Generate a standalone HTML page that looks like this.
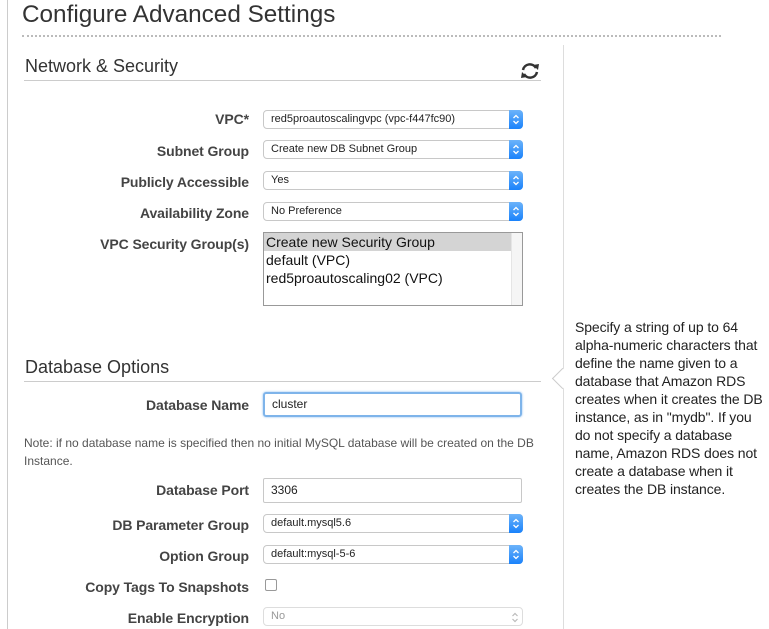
<!DOCTYPE html>
<html><head><style>
body{margin:0;width:769px;height:629px;background:#fff;font-family:"Liberation Sans",Arial,sans-serif;position:relative;overflow:hidden;color:#333}
.a{position:absolute}
.lbl{position:absolute;right:520px;font-weight:bold;font-size:14px;color:#444;white-space:nowrap;letter-spacing:-0.1px}
.sel{position:absolute;left:263px;width:258px;height:17px;border:1px solid #c8c8c8;border-radius:4px;background:#fff;font-size:11px;line-height:17px;color:#222;box-sizing:content-box}
.sel span{padding-left:7px}
.sel i{position:absolute;right:-1px;top:-1px;width:14px;height:19px;background:linear-gradient(#6cb3fa,#1a82fb);border-radius:0 4px 4px 0}
.sel svg{position:absolute;left:3px;top:4px}
.inp{position:absolute;left:263px;width:259px;border:1px solid #c8c8c8;border-radius:2px;font-size:12px;color:#222;padding-left:7px;box-sizing:border-box}
h2{position:absolute;margin:0;font-weight:normal;font-size:18px;color:#333}
.hr{position:absolute;height:1px;background:#ccc}
</style></head><body>
<div class="a" style="left:7px;top:0;width:1px;height:629px;background:#ccc"></div>
<div class="a" style="left:22px;top:1px;font-size:24.3px;color:#333">Configure Advanced Settings</div>
<div class="a" style="left:22px;top:35px;width:699px;border-top:2px dotted #bbb"></div>
<div class="a" style="left:563px;top:45px;width:1px;height:584px;background:#ddd"></div>
<h2 style="left:25px;top:56px">Network &amp; Security</h2>
<div class="hr" style="left:24px;top:80px;width:517px"></div>
<svg class="a" style="left:520px;top:62px" width="20" height="18" viewBox="0 0 20 18"><path d="M3 8 A7 7 0 0 1 16 6" fill="none" stroke="#333" stroke-width="2.5"/><path d="M13 3 L18 8 L19 2 Z" fill="#333"/><path d="M17 10 A7 7 0 0 1 4 12" fill="none" stroke="#333" stroke-width="2.5"/><path d="M7 15 L2 10 L1 16 Z" fill="#333"/></svg>
<div class="lbl" style="top:111px">VPC*</div>
<div class="sel" style="top:110px"><span>red5proautoscalingvpc (vpc-f447fc90)</span><i><svg width="8" height="11"><path d="M1.5 4 L4 1.5 L6.5 4 M1.5 7 L4 9.5 L6.5 7" fill="none" stroke="#fff" stroke-width="1.3"/></svg></i></div>
<div class="lbl" style="top:143px">Subnet Group</div>
<div class="sel" style="top:140px"><span>Create new DB Subnet Group</span><i><svg width="8" height="11"><path d="M1.5 4 L4 1.5 L6.5 4 M1.5 7 L4 9.5 L6.5 7" fill="none" stroke="#fff" stroke-width="1.3"/></svg></i></div>
<div class="lbl" style="top:174px">Publicly Accessible</div>
<div class="sel" style="top:171px"><span>Yes</span><i><svg width="8" height="11"><path d="M1.5 4 L4 1.5 L6.5 4 M1.5 7 L4 9.5 L6.5 7" fill="none" stroke="#fff" stroke-width="1.3"/></svg></i></div>
<div class="lbl" style="top:205px">Availability Zone</div>
<div class="sel" style="top:202px"><span>No Preference</span><i><svg width="8" height="11"><path d="M1.5 4 L4 1.5 L6.5 4 M1.5 7 L4 9.5 L6.5 7" fill="none" stroke="#fff" stroke-width="1.3"/></svg></i></div>
<div class="lbl" style="top:236px">VPC Security Group(s)</div>
<div class="a" style="left:263px;top:232px;width:258px;height:72px;border:1px solid #999;font-size:14px;line-height:18px;color:#111">
<div style="background:#d4d4d4;width:245px;padding-left:2px">Create new Security Group</div>
<div style="padding-left:2px">default (VPC)</div>
<div style="padding-left:2px">red5proautoscaling02 (VPC)</div>
<div class="a" style="right:0;top:0;width:10px;height:72px;background:#f5f5f5;border-left:1px solid #e5e5e5"></div>
</div>
<h2 style="left:25px;top:357px">Database Options</h2>
<div class="hr" style="left:24px;top:381px;width:517px"></div>
<div class="lbl" style="top:397px">Database Name</div>
<div class="inp" style="top:392px;height:25px;line-height:21px;border:2px solid #7eb4ea;border-radius:3px;box-shadow:0 0 2px #8bbcf0">cluster</div>
<div class="a" style="left:24px;top:434px;width:520px;font-size:12px;line-height:18px;color:#555">Note: if no database name is specified then no initial MySQL database will be created on the DB Instance.</div>
<div class="lbl" style="top:482px">Database Port</div>
<div class="inp" style="top:478px;height:25px;line-height:23px">3306</div>
<div class="lbl" style="top:517px">DB Parameter Group</div>
<div class="sel" style="top:514px"><span>default.mysql5.6</span><i><svg width="8" height="11"><path d="M1.5 4 L4 1.5 L6.5 4 M1.5 7 L4 9.5 L6.5 7" fill="none" stroke="#fff" stroke-width="1.3"/></svg></i></div>
<div class="lbl" style="top:548px">Option Group</div>
<div class="sel" style="top:545px"><span>default:mysql-5-6</span><i><svg width="8" height="11"><path d="M1.5 4 L4 1.5 L6.5 4 M1.5 7 L4 9.5 L6.5 7" fill="none" stroke="#fff" stroke-width="1.3"/></svg></i></div>
<div class="lbl" style="top:579px">Copy Tags To Snapshots</div>
<div class="a" style="left:265px;top:579px;width:10px;height:10px;border:1px solid #999;border-radius:2px"></div>
<div class="lbl" style="top:610px">Enable Encryption</div>
<div class="sel" style="top:607px;border-color:#ddd;color:#999"><span>No</span><svg style="left:auto;right:3px;top:4px" width="8" height="11"><path d="M1.5 4 L4 1.5 L6.5 4 M1.5 7 L4 9.5 L6.5 7" fill="none" stroke="#bbb" stroke-width="1.2"/></svg></div>
<div class="a" style="left:555px;top:371px;width:14px;height:14px;background:#fff;border-left:1px solid #ccc;border-bottom:1px solid #ccc;transform:rotate(45deg)"></div>
<div class="a" style="left:575px;top:318px;width:194px;font-size:14px;line-height:18px;color:#222;letter-spacing:-0.1px">Specify a string of up to 64 alpha-numeric characters that define the name given to a database that Amazon RDS creates when it creates the DB instance, as in "mydb". If you do not specify a database name, Amazon RDS does not create a database when it creates the DB instance.</div>
</body></html>
